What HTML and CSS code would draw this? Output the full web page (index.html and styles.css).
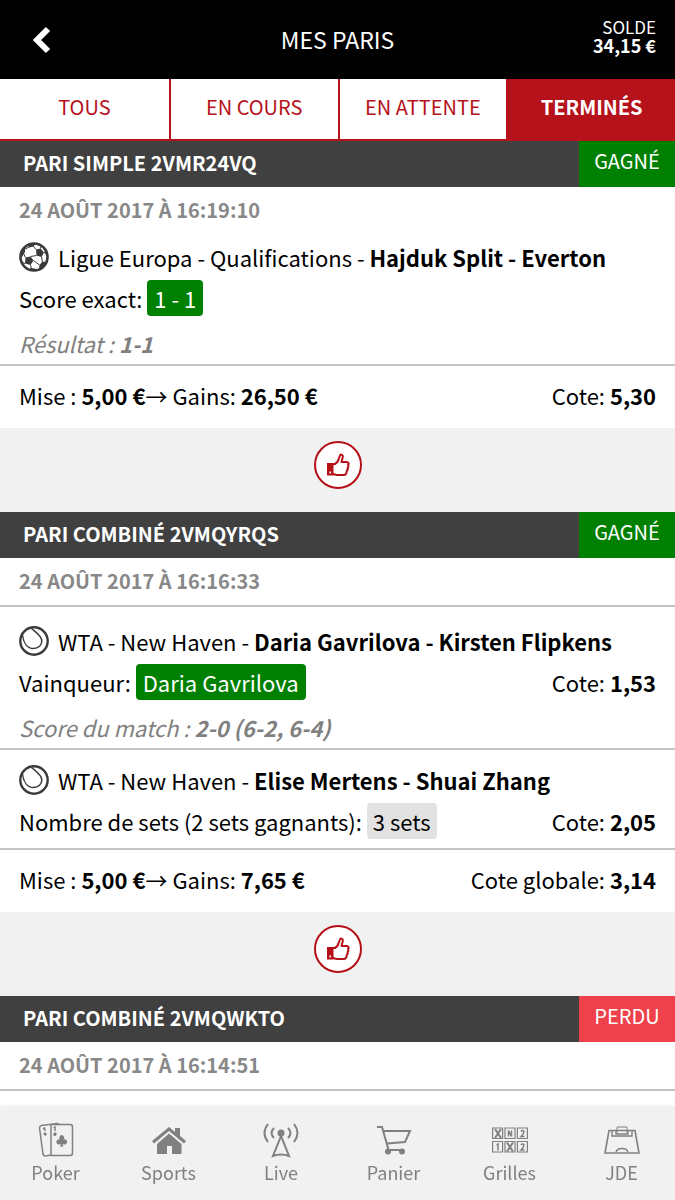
FILE: index.html
```html
<!DOCTYPE html>
<html lang="fr">
<head>
  <meta charset="utf-8">
  <meta name="viewport" content="width=device-width, initial-scale=1">
  <title>Mes paris</title>
  <link rel="stylesheet" href="styles.css">
</head>
<body>
  <svg class="sprite" width="0" height="0" aria-hidden="true">
    <symbol id="icon-tennis" viewBox="0 0 30 30">
      <circle cx="15" cy="15" r="13.7" fill="none" stroke="#3a3a3a" stroke-width="2.4"/>
      <path d="M3.500 9C4.500 17 8.500 22.500 14.500 22.500C19.500 22.500 22.800 19 22.800 15C22.800 9.500 17 6.500 12.500 2.500" fill="none" stroke="#3a3a3a" stroke-width="1.500"/>
    </symbol>
    <symbol id="icon-thumb" viewBox="0 0 24 24">
      <path d="M7 11H9C11 10 12.300 8 13 5L14 2.500C15 .8 17.200 1.800 16.800 4L15.500 9H20.500C22.700 9 23.200 11 22 12C22.700 13 22.500 14.400 21.500 15C22 16.200 21.600 17.300 20.700 18C20.800 20.300 19.800 22 17.500 22H13C10.500 22 9.500 21.500 7 21" fill="none" stroke="#b50f17" stroke-width="2" stroke-linejoin="round"/>
      <path d="M1 10H7.500V22.500H1ZM3.500 18.500V20.500H5V18.500Z" fill="#b50f17" fill-rule="evenodd"/>
    </symbol>
  </svg>

  <header class="header">
    <button class="back" type="button" aria-label="Retour">
      <svg width="18" height="28" viewBox="0 0 18 28"><path d="M15 3L4 14L15 25" fill="none" stroke="#fff" stroke-width="6"/></svg>
    </button>
    <h1>MES PARIS</h1>
    <div class="balance">SOLDE<strong>34,15 €</strong></div>
  </header>

  <nav class="tabs">
    <a href="#tous">TOUS</a>
    <a href="#en-cours">EN COURS</a>
    <a href="#en-attente">EN ATTENTE</a>
    <a href="#termines" class="active">TERMINÉS</a>
  </nav>

  <main>
    <article class="bet">
      <div class="bet-title"><h2>PARI SIMPLE 2VMR24VQ</h2><span class="state won">GAGNÉ</span></div>
      <div class="bet-date">24 AOÛT 2017 À 16:19:10</div>
      <section class="selection single">
        <div class="event">
          <svg class="sport" viewBox="0 0 30 30">
            <circle cx="15" cy="15" r="13.500" fill="#fff" stroke="#3a3a3a" stroke-width="2.600"/>
            <path d="M17 7.500L21.500 6.500L25 10.500L22.500 15L17.500 13.500ZM6.500 15.500L11.500 14.500L14.500 18.500L11.500 23L6 21.500ZM9 2L16 1.500L15 4.500L10 5.500ZM2 9L6 6L6 10L3 15H1ZM23 20L27.500 19.500L25 25L20 27L20.500 23ZM11 26L16 26.500L18 29H12ZM26 6L29 13L27.500 14L25.500 9Z" fill="#3a3a3a"/>
            <path d="M17 7.500L14.500 4.500M17.500 13.500L11.500 14.500M22.500 15L23.500 20.500M14.500 18.500L20.500 23M11.500 23L12.500 27M6.500 15.500L4.500 11.500M6 21.500L3 20M21.500 6.500L22 4M25 10.500L27 11M6 7L10.500 5" fill="none" stroke="#3a3a3a" stroke-width="1"/>
          </svg>
          <span>Ligue Europa - Qualifications - <strong>Hajduk Split - Everton</strong></span>
        </div>
        <div class="pick">
          <span>Score exact: <span class="choice won">1 - 1</span></span>
        </div>
        <div class="result">Résultat : <strong>1-1</strong></div>
      </section>
      <div class="stake">
        <span>Mise : <strong>5,00 €</strong>→ Gains: <strong>26,50 €</strong></span>
        <span>Cote: <strong>5,30</strong></span>
      </div>
      <div class="bet-footer">
        <button class="like" type="button" aria-label="J'aime"><svg><use href="#icon-thumb"/></svg></button>
      </div>
    </article>

    <article class="bet combined">
      <div class="bet-title"><h2>PARI COMBINÉ 2VMQYRQS</h2><span class="state won">GAGNÉ</span></div>
      <div class="bet-date">24 AOÛT 2017 À 16:16:33</div>
      <section class="selection">
        <div class="event">
          <svg class="sport"><use href="#icon-tennis"/></svg>
          <span>WTA - New Haven - <strong>Daria Gavrilova - Kirsten Flipkens</strong></span>
        </div>
        <div class="pick">
          <span>Vainqueur: <span class="choice won">Daria Gavrilova</span></span>
          <span>Cote: <strong>1,53</strong></span>
        </div>
        <div class="result">Score du match : <strong>2-0 (6-2, 6-4)</strong></div>
      </section>
      <section class="selection">
        <div class="event">
          <svg class="sport"><use href="#icon-tennis"/></svg>
          <span>WTA - New Haven - <strong>Elise Mertens - Shuai Zhang</strong></span>
        </div>
        <div class="pick last">
          <span>Nombre de sets (2 sets gagnants): <span class="choice">3 sets</span></span>
          <span>Cote: <strong>2,05</strong></span>
        </div>
      </section>
      <div class="stake">
        <span>Mise : <strong>5,00 €</strong>→ Gains: <strong>7,65 €</strong></span>
        <span>Cote globale: <strong>3,14</strong></span>
      </div>
      <div class="bet-footer">
        <button class="like" type="button" aria-label="J'aime"><svg><use href="#icon-thumb"/></svg></button>
      </div>
    </article>

    <article class="bet combined">
      <div class="bet-title"><h2>PARI COMBINÉ 2VMQWKTO</h2><span class="state lost">PERDU</span></div>
      <div class="bet-date">24 AOÛT 2017 À 16:14:51</div>
    </article>
  </main>

  <nav class="bottom-nav">
    <a href="#poker">
      <svg viewBox="0 0 36 36" fill="none" stroke="currentColor" stroke-width="1.500">
        <path d="M13 2.500H32Q34.500 2.500 34.500 5V31Q34.500 33.500 32 33.500H13ZM13 33L7.500 34Q5.500 34 5 32L1.500 6Q1.500 4 3.500 3.500L19 1.500L22 2.500"/>
        <path d="M15.500 6L17 5V9M5 7L6.500 6L7 9"/>
        <path d="M22 17.500A2.500 2.500 0 1 1 25.500 17.500A2.600 2.600 0 1 1 24.500 21.500L25.500 24.500H22L23 21.500A2.600 2.600 0 1 1 22 17.500ZM15 12L17 10L19 12L17.500 14H16ZM5 12L7 10L9 12L7.500 14Z" fill="currentColor" stroke="none"/>
      </svg>
      <span>Poker</span>
    </a>
    <a href="#sports">
      <svg viewBox="0 0 36 36" fill="currentColor">
        <path d="M18 5L24 10V6H29V14L35 19L33 21.500L18 9L3 21.500L1 19Z"/>
        <path d="M18 11.500L30.500 22V32H21V24H16V32H6V22Z"/>
      </svg>
      <span>Sports</span>
    </a>
    <a href="#live">
      <svg viewBox="0 0 36 36" fill="none" stroke="currentColor" stroke-width="2">
        <circle cx="18" cy="11" r="3.500" fill="currentColor" stroke="none"/>
        <path d="M18 14L10 34Q18 31 26 34Z"/>
        <path d="M5 2Q-2 11 5 20M11 6Q6 11 11 16M25 6Q30 11 25 16M31 2Q38 11 31 20"/>
      </svg>
      <span>Live</span>
    </a>
    <a href="#panier">
      <svg viewBox="0 0 36 36" fill="none" stroke="currentColor" stroke-width="2">
        <path d="M1 5H6L12 26V28H26M7.500 9H34L29 20L11 21.500"/>
        <circle cx="12" cy="29.500" r="3" fill="currentColor" stroke="none"/>
        <circle cx="26" cy="29.500" r="3" fill="currentColor" stroke="none"/>
      </svg>
      <span>Panier</span>
    </a>
    <a href="#grilles">
      <svg viewBox="0 0 36 36" fill="none" stroke="currentColor" stroke-width="1.200">
        <path d="M.6 6H10.600V16.500H.6ZM13 6H23V16.500H13ZM25.400 6H35.400V16.500H25.400ZM.6 19.500H10.600V30H.6ZM13 19.500H23V30H13ZM25.400 19.500H35.400V30H25.400Z"/>
        <path d="M3 7L9 16M9 7L3 16M15 20.500L21 29.500M21 20.500L15 29.500" stroke-width="2"/>
        <path d="M16.500 14.500V8.500L19.500 14.500V8.500M29 9.500Q30.500 7.500 32 9.500Q32 11.500 29 14.500H32.500M29 23Q30.500 21 32 23Q32 25 29 28H32.500M4.500 23L6 22V28.500" stroke-width="1.500"/>
      </svg>
      <span>Grilles</span>
    </a>
    <a href="#jde">
      <svg viewBox="0 0 36 36" fill="none" stroke="currentColor" stroke-width="1.600">
        <path d="M5 8.500H31L35 31H1Z"/>
        <path d="M8 9V14H28V9M12 9V12H24V9M12 30Q13 26.500 18 26.500Q23 26.500 24 30" stroke-width="1.400"/>
        <path d="M13 11V5H23V11" stroke-width="1"/>
      </svg>
      <span>JDE</span>
    </a>
  </nav>
</body>
</html>
```
FILE: styles.css
```css
* {
  box-sizing: border-box;
}

body {
  margin: 0;
  padding-bottom: 94px;
  background: #fff;
  color: #000;
  font-family: "Noto Sans CJK SC", "Open Sans", sans-serif;
  font-size: 22px;
  line-height: 42px;
}

h1,
h2 {
  margin: 0;
  font-size: inherit;
}

a {
  color: inherit;
  text-decoration: none;
}

button {
  padding: 0;
  border: 0;
  background: none;
  cursor: pointer;
}

svg {
  display: block;
}

.sprite {
  position: absolute;
}

/* Header */
.header {
  display: grid;
  grid-template-columns: 1fr auto 1fr;
  align-items: center;
  height: 79px;
  padding: 0 19px;
  background: #000;
  color: #fff;
}

.back {
  justify-self: start;
  padding-left: 14px;
}

.header h1 {
  padding-bottom: 2px;
  font-size: 23px;
  font-weight: 400;
}

.balance {
  justify-self: end;
  padding-bottom: 8px;
  text-align: right;
  font-size: 17px;
  line-height: 18px;
}

.balance strong {
  display: block;
  font-size: 18px;
}

/* Filter tabs */
.tabs {
  display: grid;
  grid-template-columns: repeat(4, 1fr);
  border-bottom: 2px solid #b5121b;
  color: #b5121b;
  font-size: 20px;
  line-height: 56px;
  text-align: center;
}

.tabs a {
  height: 60px;
}

.tabs a + a {
  border-left: 2px solid #b5121b;
}

.tabs .active {
  background: #b5121b;
  color: #fff;
  font-weight: 700;
}

/* Bets */
.bet-title {
  display: flex;
  justify-content: space-between;
  height: 46px;
  padding-left: 23px;
  background: #404040;
  color: #fff;
  font-size: 20px;
  line-height: 43px;
}

.state {
  width: 96px;
  line-height: 40px;
  text-align: center;
}

.won {
  background: #008000;
  color: #fff;
}

.lost {
  background: #ef414b;
}

.bet-date {
  padding: 0 19px 2px;
  color: #888;
  font-size: 20px;
  font-weight: 700;
  line-height: 45px;
}

.combined .bet-date {
  border-bottom: 2px solid #c4c4c4;
}

.selection {
  padding: 9px 19px 1px;
  border-bottom: 2px solid #c4c4c4;
}

.selection.single {
  padding-top: 2px;
}

.bet-date + .selection:not(.single) {
  padding-top: 13px;
}

.event {
  display: flex;
  align-items: center;
  gap: 9px;
}

.sport {
  width: 30px;
  height: 30px;
}

.pick,
.stake {
  display: flex;
  justify-content: space-between;
}

.pick {
  padding-bottom: 2px;
  line-height: 40px;
}

.pick.last {
  margin-bottom: 4px;
}

.choice {
  display: inline-block;
  padding: 0 7px;
  border-radius: 4px;
  line-height: 36px;
}

.choice:not(.won) {
  padding: 0 6px;
  background: #e2e2e2;
}

.result {
  margin-top: 3px;
  color: #808080;
  font-style: italic;
  line-height: 40px;
}

.stake {
  padding: 0 19px 4px;
  line-height: 58px;
}

.bet-footer {
  display: flex;
  justify-content: center;
  height: 84px;
  padding-top: 13px;
  background: #f1f1f1;
}

.like {
  display: flex;
  align-items: center;
  justify-content: center;
  width: 48px;
  height: 48px;
  border: 2px solid #b50f17;
  border-radius: 50%;
  background: #fff;
}

.like svg {
  width: 24px;
  height: 24px;
}

/* Bottom navigation */
.bottom-nav {
  position: fixed;
  right: 0;
  bottom: 0;
  left: 0;
  display: grid;
  grid-template-columns: 111fr 115fr 110fr 115fr 117fr 107fr;
  height: 94px;
  padding-top: 16px;
  background: #f1f1f1;
  box-shadow: 0 0 5px #f1f1f1;
  color: #808080;
  font-size: 18px;
  line-height: 28px;
}

.bottom-nav a {
  display: flex;
  flex-direction: column;
  align-items: center;
}

.bottom-nav svg {
  width: 36px;
  height: 36px;
}
```
